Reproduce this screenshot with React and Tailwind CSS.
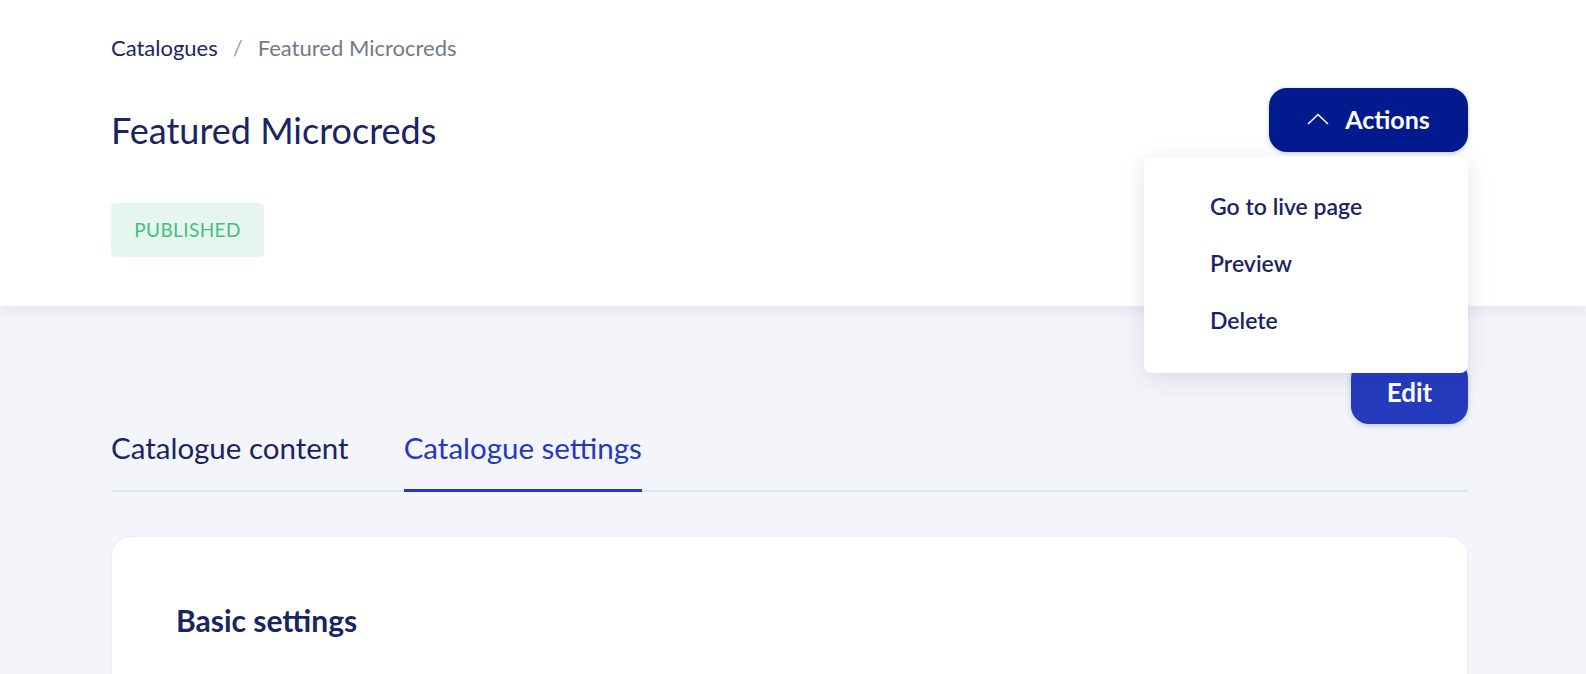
import React from "react";

const font = { fontFamily: "Lato, 'Noto Sans', sans-serif" };

export default function App() {
  return (
    <div className="min-h-[674px] bg-[#f4f5fa] text-[#1b2463]" style={font}>
      {/* Header */}
      <div className="relative z-10 bg-white shadow-[0_4px_14px_rgba(40,60,160,0.09)]">
        <div className="ml-[111px] w-[1357px] pt-[36px] pb-[49px]">
          <nav className="flex items-center text-[22px] leading-[24px]">
            <span className="text-[#1b2463]">Catalogues</span>
            <span className="mx-[15px] text-[#9aa1a8]">/</span>
            <span className="text-[#717b85]">Featured Microcreds</span>
          </nav>
          <div className="relative mt-[28px] flex items-start justify-between">
            <h1 className="mt-[20px] text-[36px] leading-[44px] font-normal text-[#1b2463]">
              Featured Microcreds
            </h1>
            <div className="relative">
              <button className="flex h-[64px] w-[199px] items-center justify-center gap-[16px] rounded-[18px] bg-[#011a8d] text-[25px] font-bold text-white shadow-[0_1px_4px_rgba(20,40,140,0.25)]">
                <svg width="22" height="12" viewBox="0 0 22 12" fill="none" className="-mt-[3px]">
                  <polyline points="1,11 11,1.5 21,11" stroke="white" strokeWidth="1.6" />
                </svg>
                <span>Actions</span>
              </button>
              <div className="absolute right-0 top-[69px] w-[324px] rounded-[8px] bg-white pt-[35px] pb-[39px] shadow-[0_6px_24px_rgba(30,40,120,0.13)]">
                <ul className="flex flex-col gap-[29px] pl-[66px] text-[23px] font-semibold leading-[28px] text-[#1b2463]">
                  <li>Go to live page</li>
                  <li>Preview</li>
                  <li>Delete</li>
                </ul>
              </div>
            </div>
          </div>
          <div className="mt-[51px] flex">
            <span className="flex h-[54px] w-[153px] items-center justify-center rounded-[4px] bg-[#e6f6ef] text-[19px] tracking-[0.4px] text-[#41bf80]">
              PUBLISHED
            </span>
          </div>
        </div>
      </div>

      {/* Body */}
      <div className="ml-[111px] w-[1357px] pt-[54px]">
        <div className="flex justify-end">
          <button className="h-[64px] w-[117px] rounded-[18px] bg-[#253bbd] text-[26px] font-bold text-white shadow-[0_2px_6px_rgba(20,40,140,0.2)]">
            Edit
          </button>
        </div>
        <div className="flex gap-[55px] border-b-2 border-[#dde6f5]">
          <div className="pt-[6px] pb-[24px] text-[29.5px] leading-[36px] text-[#1b2463]">
            Catalogue content
          </div>
          <div className="-mb-[2px] border-b-[3px] border-[#2438c4] pt-[6px] pb-[23px] text-[29.5px] leading-[36px] text-[#2438c4]">
            Catalogue settings
          </div>
        </div>
        <div className="mt-[44px] h-[300px] rounded-[20px] border border-[#eceef4] bg-white px-[64px] pt-[65px]">
          <h2 className="text-[30px] font-bold leading-[36px] text-[#1b2463]">Basic settings</h2>
        </div>
      </div>
    </div>
  );
}
